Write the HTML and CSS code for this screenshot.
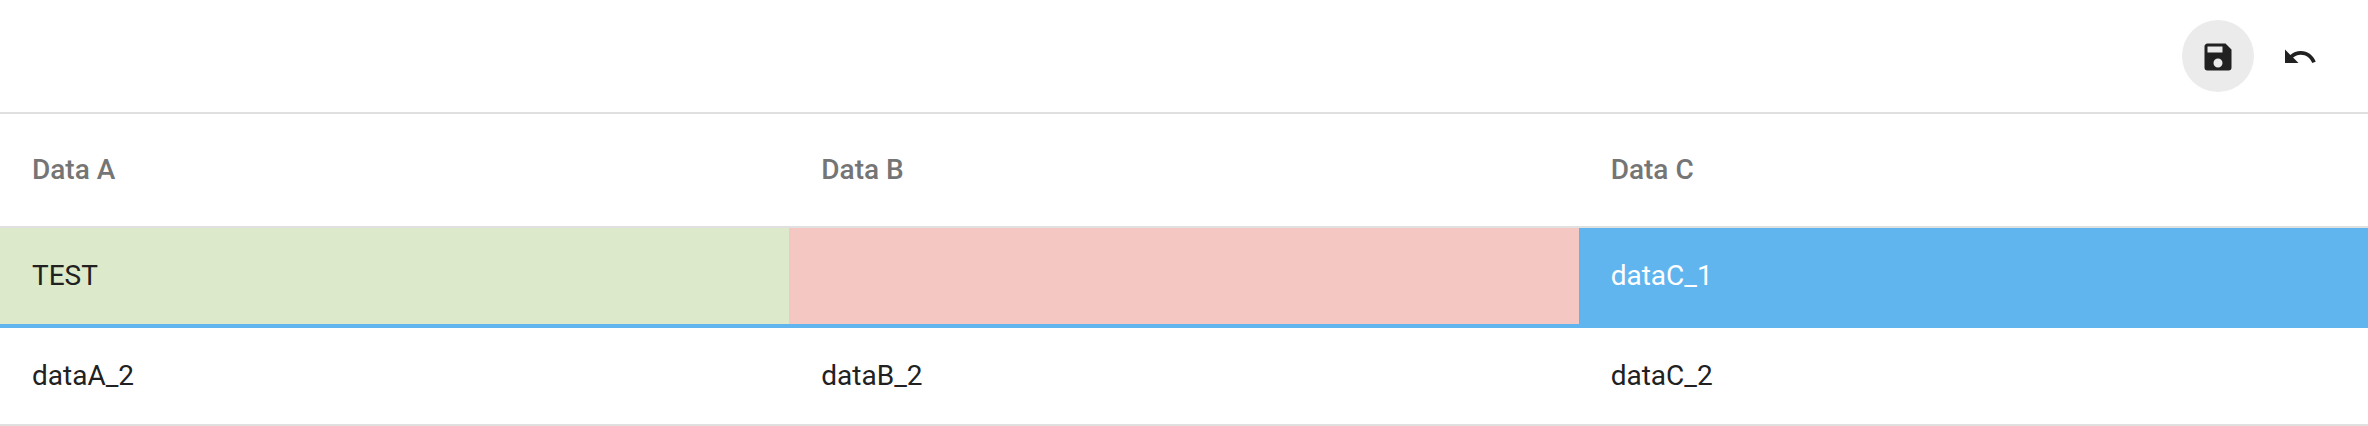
FILE: index.html
```html
<!DOCTYPE html>
<html lang="en">
<head>
<meta charset="utf-8">
<title>Data table</title>
<link rel="stylesheet" href="styles.css">
</head>
<body>
<div class="toolbar">
  <button class="icon-button active" aria-label="Save">
    <svg class="icon" viewBox="0 0 24 24"><path d="M15,9H5V5H15M12,19A3,3 0 0,1 9,16A3,3 0 0,1 12,13A3,3 0 0,1 15,16A3,3 0 0,1 12,19M17,3H5C3.89,3 3,3.9 3,5V19A2,2 0 0,0 5,21H19A2,2 0 0,0 21,19V7L17,3Z"/></svg>
  </button>
  <button class="icon-button" aria-label="Undo">
    <svg class="icon" viewBox="0 0 24 24"><path d="M12.5,8C9.85,8 7.45,9 5.6,10.6L2,7V16H11L7.38,12.38C8.77,11.22 10.54,10.5 12.5,10.5C16.04,10.5 19.05,12.81 20.1,16L22.47,15.22C21.08,11.03 17.15,8 12.5,8Z"/></svg>
  </button>
</div>
<div class="row header">
  <div class="cell">Data A</div>
  <div class="cell">Data B</div>
  <div class="cell">Data C</div>
</div>
<div class="row editing">
  <div class="cell changed">TEST</div>
  <div class="cell invalid"></div>
  <div class="cell selected">dataC_1</div>
</div>
<div class="row">
  <div class="cell">dataA_2</div>
  <div class="cell">dataB_2</div>
  <div class="cell">dataC_2</div>
</div>
</body>
</html>
```
FILE: styles.css
```css
* { box-sizing: border-box; }
body {
  margin: 0;
  background: #fff;
  color: #212121;
  font: 400 28px/36px Roboto, sans-serif;
}
.toolbar {
  display: flex;
  align-items: center;
  justify-content: flex-end;
  gap: 10px;
  height: 114px;
  padding: 0 32px 0 0;
  border-bottom: 2px solid #e0e0e0;
}
.icon-button {
  display: flex;
  align-items: center;
  justify-content: center;
  width: 72px;
  height: 72px;
  padding: 1px 0 0;
  border: 0;
  border-radius: 50%;
  background: transparent;
}
.icon-button.active { background: #ebebeb; }
.icon { width: 36px; height: 36px; fill: #212121; }
.row {
  display: grid;
  grid-template-columns: repeat(3, 1fr);
  height: 98px;
  border-bottom: 2px solid #e0e0e0;
}
.cell { display: flex; align-items: center; padding: 0 32px; }
.header { height: 114px; color: #757575; font-weight: 500; }
.editing { height: 100px; border-bottom: 4px solid #60b5ef; }
.changed { background: #dceacb; }
.invalid { background: #f4c7c3; }
.selected { background: #60b5ef; color: #fff; }
```
